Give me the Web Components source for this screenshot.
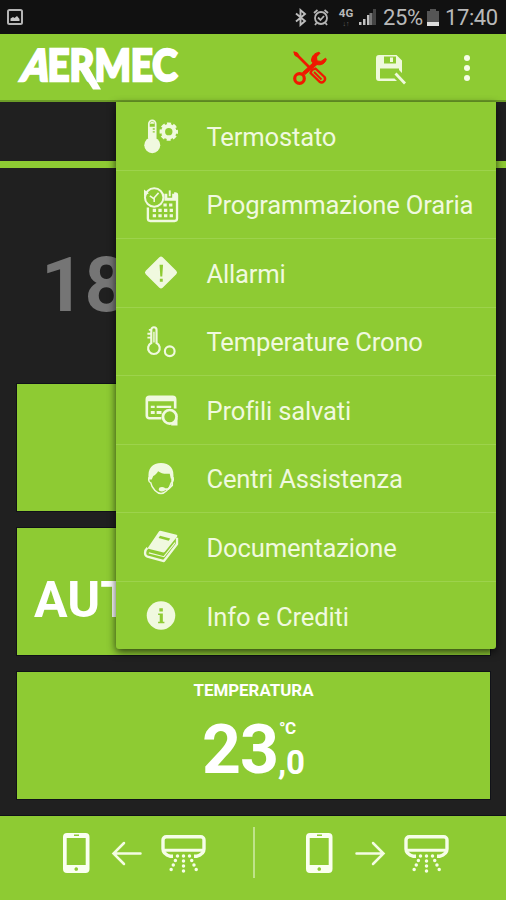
<!DOCTYPE html>
<html lang="it">
<head>
<meta charset="utf-8">
<title>Aermec</title>
<style>
  body {
    margin: 0;
    background: #202020;
    font-family: Roboto, "Liberation Sans", sans-serif;
  }
</style>
</head>
<body>
<aermec-app></aermec-app>

<script>
const ICONS = {
  picture: `<rect x="1" y="1" width="14" height="14" rx="1.5" fill="none" stroke="#b5b5b5" stroke-width="2"/><path fill="#c8c8c8" d="M3.5 12V9.5L6 8l1.5 1L10 7l2.5 3v2z"/>`,
  bluetooth: `<path fill="none" stroke="#bdbdbd" stroke-width="1.9" d="M1 4.500l9 7.500-4.500 4V1L10 5 1 12.500"/>`,
  alarm: `<g fill="none" stroke="#b5b5b5" stroke-width="1.800"><circle cx="8" cy="9" r="6"/><path d="M1 4l3.500-3M15 4l-3.500-3M5 8.500l2.500 2.500 3.500-4M3.500 14l-1.500 2M12.500 14l1.500 2"/></g>`,
  signal: `<path fill="#c0c0c0" d="M0 14h2.500v3H0zM4 11h2.500v6H4zM8 7h2.500v10H8z"/><path fill="#777" d="M10.500 5h3v12h-3z"/><path fill="#444" d="M14 1h3v16h-3z"/>`,
  battery: `<path fill="#555" d="M3 0h6v2h3v12H0V2h3z"/><path fill="#ddd" d="M0 13h12v4H0z"/>`,
  tools: `
    <g fill="none" stroke="#f01800" stroke-linejoin="round">
      <path stroke-width="2.600" d="M2 2l16 16"/>
      <path fill="#f01800" stroke-width="1" d="M.8.8l3.700 1.200 2 4.500-4.500-2z"/>
      <path stroke-width="2.400" d="M19 19l3.500-1.500 9 8.500c2 3-2 7-5 4.700L17.500 22z"/>
      <path stroke-width="1.800" d="M21 21l7.500 7.500"/>
      <path fill="#f01800" stroke-width="1" d="M9.500 21.500l10.500-9.500c-1-1-1.500-1.500-1.500-3C19 4.500 22 2 26 1.200l1 1-3.500 3.700.5 4 4 .5 4.500-3.200.8 1c-1 4-5 6.500-9.300 5.300L12 23.500z"/>
      <circle stroke-width="3.200" cx="6.500" cy="27.500" r="4.800"/>
    </g>`,
  save: `
    <path fill="#eff9dc" fill-rule="evenodd" d="M3 0h17.500L26 5.500V18l-3-3v-1.500H4v10h14.500L21 26H3a3 3 0 0 1-3-3V3a3 3 0 0 1 3-3zm5 1.500v7h12v-7z"/>
    <path fill="#eff9dc" d="M14 2.500h3v4.500h-3z"/>
    <path stroke="#eff9dc" stroke-width="2.800" d="M19.500 18.500l9.500 10"/>`,
  more: `<g fill="#f6fce9"><circle cx="3" cy="3" r="3"/><circle cx="3" cy="13" r="3"/><circle cx="3" cy="23" r="3"/></g>`,
  thermostat: `
    <path fill="none" stroke="currentColor" stroke-width="1.800" d="M5 20V5a3.500 3.500 0 0 1 7 0v15"/>
    <path fill="currentColor" d="M5 8h7v1.500H9V11h3v1.500H9V14h3v7H5zM6.200 5c0-3 4.600-3 4.600 0z"/>
    <circle fill="currentColor" cx="8.500" cy="27" r="8.200"/>
    <g fill="none" stroke="currentColor"><circle cx="25.500" cy="13" r="5.800" stroke-width="4"/>
    <circle cx="25.500" cy="13" r="8" stroke-width="3" stroke-dasharray="4 2.283" stroke-dashoffset="2"/></g>`,
  schedule: `
    <path fill="none" stroke="currentColor" stroke-width="2.400" d="M4 20v11.500a2.500 2.500 0 0 0 2.500 2.500h25a2.500 2.500 0 0 0 2.500-2.500V7.500a2 2 0 0 0-2-2h-1"/>
    <path fill="currentColor" d="M21 6h3v4h5V6h6v7H21z"/><path fill="currentColor" d="M25.500 2.500h2v6h-2z"/>
    <circle fill="none" stroke="currentColor" stroke-width="2.100" cx="10.500" cy="9.800" r="9.500"/>
    <path fill="currentColor" d="M0 1.500l5 4-5 3z"/><path fill="none" stroke="currentColor" stroke-width="1.600" d="M15 5l-4.500 5v4.500M6 8l4 3"/>
    <path stroke="currentColor" stroke-width="3.200" stroke-dasharray="3.400 2.400" d="M20 17.500h10M9 23h21M9 28.600h21"/>`,
  alert: `<path fill="currentColor" fill-rule="evenodd" d="M15.800 1.300q1.700-1.600 3.400 0l14 14q1.700 1.700 0 3.400l-14 14q-1.700 1.600-3.400 0l-14-14q-1.700-1.700 0-3.400zM16 9l.8 12h2l.8-12zM16.300 23.500v3h3v-3z"/>`,
  crono: `
    <g fill="none" stroke="currentColor" stroke-width="2.200"><path d="M7.500 18.500V5a2.700 2.700 0 0 1 5.400 0v13.500a6 6 0 1 1-5.400 0z"/><circle cx="26.500" cy="27" r="5"/></g>
    <path fill="currentColor" d="M5 4h3v2H5zM3.500 8h4v2h-4zM3.500 12h4v2h-4zM9.500 7h1.500v11H9.500z"/>`,
  profiles: `
    <path fill="none" stroke="currentColor" stroke-width="2.700" d="M18 26H5.500a2.600 2.600 0 0 1-2.600-2.600V6.500A2.600 2.600 0 0 1 5.500 4h24a2.600 2.600 0 0 1 2.600 2.600V16"/>
    <path fill="currentColor" d="M3 4h29v4.500H3zM7 13h4v2.500H7zM13 13h15v2.500H13zM7 18.500h4v3H7zM13 18.500h5v3h-5z"/>
    <circle fill="none" stroke="currentColor" stroke-width="2.800" cx="26.500" cy="24.500" r="7"/><path fill="currentColor" d="M28 32.500l6.500-7v8H28z"/>`,
  support: `
    <path fill="currentColor" d="M5 18C3 6 9 1 17.500 1S32 6 30 18l-2.500-1-1-5c-6 .5-9-.5-12-2.500-1 2-3 4-5 5L8 18z"/>
    <path fill="none" stroke="currentColor" stroke-width="1.500" d="M6 15c-2 1-1.500 6 1 6.500 1 6 7 11 10.500 11s9-5 10.500-11c2.500-.5 3-5.500 1-6.500"/>
    <path fill="none" stroke="currentColor" stroke-width="1.800" d="M29 17v7l-4 4h-6"/><ellipse cx="18.500" cy="28" rx="3.200" ry="2.300" fill="currentColor"/>`,
  book: `
    <path fill="currentColor" fill-rule="evenodd" d="M15 2Q16 .5 18 1l15.500 4q1.500.5.500 2L21.500 22.500q-1 1-2.500.5L3.500 19zM16.500 6l-1.500 2.300L25.500 11l1.500-2.300z"/>
    <path fill="none" stroke="currentColor" stroke-width="2.400" stroke-linejoin="round" d="M3.500 18.500c-3.500 3-3 8 0 9l17 4.500L34 14.500V8"/>
    <path fill="none" stroke="currentColor" stroke-width="1.200" d="M5 23.500l15.500 4L32 13"/>`,
  info: `<circle fill="currentColor" cx="17.500" cy="17" r="14.700"/><path fill="#8ecb33" d="M15.800 9.500h3.600v3.400h-3.600zM14.500 15h4.900v8.500H21V25h-6.500v-1.500h1.700v-7h-1.700z"/>`,
  phone: `<path fill="#fafff0" fill-rule="evenodd" d="M4 0h18.500a4 4 0 0 1 4 4v32a4 4 0 0 1-4 4H4a4 4 0 0 1-4-4V4a4 4 0 0 1 4-4zM3.700 5v27h19V5zM11 1.500v1.400h5V1.500zM13.200 34.200a1.800 1.800 0 1 0 .1 0z"/>`,
  left: `<path fill="none" stroke="#f4fce3" stroke-width="2.500" stroke-linecap="round" d="M12 2L1.500 12.500 12 23M1.500 12.500h27"/>`,
  right: `<path fill="none" stroke="#f4fce3" stroke-width="2.500" stroke-linecap="round" d="M18 2l10.500 10.500L18 23M28.500 12.500h-27"/>`,
  split: `
    <path fill="none" stroke="#f6fde8" stroke-width="3.400" stroke-linejoin="round" d="M12 21.300H9.500C5 20 2 17 2 14V5a3.300 3.300 0 0 1 3.300-3.300h34.400A3.300 3.300 0 0 1 43 5v9c0 3-3 6-7.500 7.300H33"/>
    <path stroke="#f6fde8" stroke-width="3" d="M2 15.300h41"/>
    <path fill="none" stroke="#f6fde8" stroke-width="3.500" stroke-linecap="round" stroke-dasharray="0 5" d="M16.500 21L9.500 36M22.500 21v16M28.500 21l7.500 15"/>`
};

class AppIcon extends HTMLElement {
  constructor() {
    super();
    this.attachShadow({ mode: 'open' });
  }

  connectedCallback() {
    const [w, h] = this.getAttribute('size').split(' ');
    const box = this.getAttribute('box') || `${w} ${h}`;
    this.shadowRoot.innerHTML = `
      <style>
        :host { display: block; flex: none; }
        svg { display: block; overflow: visible; }
      </style>
      <svg width="${w}" height="${h}" viewBox="0 0 ${box}">${ICONS[this.getAttribute('name')]}</svg>
    `;
  }
}

class StatusBar extends HTMLElement {
  constructor() {
    super();
    this.attachShadow({ mode: 'open' }).innerHTML = `
      <style>
        :host {
          display: flex;
          align-items: center;
          height: 34px;
          padding: 0 7px;
          box-sizing: border-box;
          background: #111;
          color: #b9b9b9;
          font-size: 22px;
          white-space: nowrap;
        }
        .space { flex: 1; }
        .net {
          display: flex;
          flex-direction: column;
          align-items: center;
          width: 16px;
          margin: 0 5px 0 9px;
          font-size: 11.500px;
          font-weight: 700;
          line-height: 13px;
        }
        .net small { font-size: 7px; line-height: 8px; color: #666; }
        .level { width: 39px; margin: 0 5px 0 7px; letter-spacing: -.4px; }
        .clock { width: 53px; margin: 0 1px 0 6px; letter-spacing: -.4px; }
      </style>
      <app-icon name="picture" size="16 16"></app-icon>
      <span class="space"></span>
      <app-icon name="bluetooth" size="11 17" style="margin-right:7px"></app-icon>
      <app-icon name="alarm" size="16 17"></app-icon>
      <span class="net">4G<small>↓↑</small></span>
      <app-icon name="signal" size="17 18"></app-icon>
      <span class="level">25%</span>
      <app-icon name="battery" size="12 17"></app-icon>
      <span class="clock">17:40</span>
    `;
  }
}

class AermecLogo extends HTMLElement {
  constructor() {
    super();
    this.attachShadow({ mode: 'open' }).innerHTML = `
      <style>
        :host { display: block; }
        svg { display: block; overflow: visible; }
        text { font: 900 44px Lato, sans-serif; fill: #fff; stroke: #fff; stroke-width: 2.400; }
      </style>
      <svg width="160" height="42" viewBox="0 0 160 42">
        <text transform="translate(1.500 32.700) skewX(-14)" textLength="27" lengthAdjust="spacingAndGlyphs">A</text>
        <text transform="translate(29.500 32.700)" textLength="130" lengthAdjust="spacingAndGlyphs">ERMEC</text>
        <path fill="#fff" d="M61 20h10l12 21.500h-8z"/>
      </svg>
    `;
  }
}

class AppToolbar extends HTMLElement {
  constructor() {
    super();
    this.attachShadow({ mode: 'open' }).innerHTML = `
      <style>
        :host {
          display: flex;
          align-items: flex-start;
          height: 68px;
          padding: 14px 36px 0 18px;
          box-sizing: border-box;
          background: #8ecb33;
          border-bottom: 2px solid #6c9d27;
        }
        ::slotted(.gap) { flex: 1; }
      </style>
      <aermec-logo></aermec-logo>
      <slot></slot>
    `;
  }
}

class ValueCard extends HTMLElement {
  constructor() {
    super();
    this.attachShadow({ mode: 'open' }).innerHTML = `
      <style>
        :host {
          display: block;
          height: 127px;
          background: #8ecb33;
          box-shadow: 0 0 0 1px #101218;
          color: #fff;
          font-weight: 700;
          overflow: hidden;
        }
      </style>
      <slot></slot>
    `;
  }
}

class TemperatureReading extends HTMLElement {
  constructor() {
    super();
    this.attachShadow({ mode: 'open' }).innerHTML = `
      <style>
        :host { display: block; }
        .title {
          padding-top: 8px;
          text-align: center;
          font-size: 16.900px;
          line-height: 20px;
        }
        .value {
          display: flex;
          justify-content: center;
          margin-top: 13px;
        }
        .whole { font-size: 68px; line-height: 74px; letter-spacing: -1px; }
        .side { display: flex; flex-direction: column; }
        .unit { padding: 5px 0 0 1px; font-size: 17px; line-height: 20px; letter-spacing: -.5px; }
        .decimal { padding-top: 8px; font-size: 33px; line-height: 34px; }
      </style>
      <div class="title"><slot></slot></div>
      <div class="value">
        <span class="whole"><slot name="whole"></slot></span>
        <span class="side">
          <span class="unit"><slot name="unit"></slot></span>
          <span class="decimal"><slot name="decimal"></slot></span>
        </span>
      </div>
    `;
  }
}

class MenuItem extends HTMLElement {
  constructor() {
    super();
    this.attachShadow({ mode: 'open' });
  }

  connectedCallback() {
    this.shadowRoot.innerHTML = `
      <style>
        :host {
          display: flex;
          align-items: center;
          gap: 28.500px;
          height: 68.500px;
          padding: 1px 0 0 28px;
          box-sizing: border-box;
          border-bottom: 1px solid #9dd34c;
          color: #f0f9df;
          font-size: 25.600px;
          letter-spacing: -.18px;
          white-space: nowrap;
        }
        :host(:last-child) { border-bottom: none; }
        span { padding-top: 1px; }
      </style>
      <app-icon name="${this.getAttribute('icon')}" size="34 34" box="35 35"></app-icon>
      <span><slot></slot></span>
    `;
  }
}

class OverflowMenu extends HTMLElement {
  constructor() {
    super();
    this.attachShadow({ mode: 'open' }).innerHTML = `
      <style>
        :host {
          display: block;
          width: 380px;
          height: 547px;
          background: #8ecb33;
          border-radius: 0 0 3px 3px;
          box-shadow: 0 3px 8px rgba(0, 0, 0, .7);
        }
      </style>
      <slot></slot>
    `;
  }
}

class SyncBar extends HTMLElement {
  constructor() {
    super();
    this.attachShadow({ mode: 'open' }).innerHTML = `
      <style>
        :host {
          display: flex;
          height: 84px;
          background: #8ecb33;
          box-shadow: 0 -1px #101218;
        }
        .group { display: flex; width: 253px; padding: 17px 0 0 63px; box-sizing: border-box; }
        .group:last-child { width: 251px; padding-left: 51px; }
        .group app-icon:nth-child(2) { margin: 8px 19px 0 22px; }
        .group app-icon:nth-child(3) { margin-top: 2px; }
        .line { width: 2px; height: 51px; margin-top: 11px; background: #bfe389; }
      </style>
      <div class="group">
        <app-icon name="phone" size="27 40"></app-icon>
        <app-icon name="left" size="30 25"></app-icon>
        <app-icon name="split" size="45 39"></app-icon>
      </div>
      <div class="line"></div>
      <div class="group">
        <app-icon name="phone" size="27 40"></app-icon>
        <app-icon name="right" size="30 25"></app-icon>
        <app-icon name="split" size="45 39"></app-icon>
      </div>
    `;
  }
}

class AermecApp extends HTMLElement {
  constructor() {
    super();
    this.attachShadow({ mode: 'open' }).innerHTML = `
      <style>
        :host {
          position: relative;
          display: flex;
          flex-direction: column;
          height: 900px;
          overflow: hidden;
        }
        .tabs { height: 59px; background: #202020; border-bottom: 7px solid #8ecb33; }
        .external {
          height: 216px;
          padding: 78px 0 0 41px;
          box-sizing: border-box;
          color: #757575;
          font-size: 76px;
          font-weight: 700;
          line-height: 78px;
        }
        .cards { flex: 1; display: grid; gap: 17px; align-content: start; padding: 0 16px 0 17px; }
        .mode { padding: 42px 0 0 17px; font-size: 50px; line-height: 60px; }
        overflow-menu { position: absolute; left: 116px; top: 102px; }
      </style>
      <status-bar></status-bar>
      <app-toolbar>
        <span class="gap"></span>
        <app-icon name="tools" size="34 35" style="margin:3px 49px 0 0"></app-icon>
        <app-icon name="save" size="29 29" style="margin:7px 59px 0 0"></app-icon>
        <app-icon name="more" size="6 26" style="margin-top:7px"></app-icon>
      </app-toolbar>
      <div class="tabs"></div>
      <div class="external">18</div>
      <div class="cards">
        <value-card></value-card>
        <value-card><div class="mode">AUT</div></value-card>
        <value-card>
          <temperature-reading>
            TEMPERATURA
            <span slot="whole">23</span>
            <span slot="unit">°C</span>
            <span slot="decimal">,0</span>
          </temperature-reading>
        </value-card>
      </div>
      <sync-bar></sync-bar>
      <overflow-menu>
        <menu-item icon="thermostat">Termostato</menu-item>
        <menu-item icon="schedule">Programmazione Oraria</menu-item>
        <menu-item icon="alert">Allarmi</menu-item>
        <menu-item icon="crono">Temperature Crono</menu-item>
        <menu-item icon="profiles">Profili salvati</menu-item>
        <menu-item icon="support">Centri Assistenza</menu-item>
        <menu-item icon="book">Documentazione</menu-item>
        <menu-item icon="info">Info e Crediti</menu-item>
      </overflow-menu>
    `;
  }
}

customElements.define('app-icon', AppIcon);
customElements.define('status-bar', StatusBar);
customElements.define('aermec-logo', AermecLogo);
customElements.define('app-toolbar', AppToolbar);
customElements.define('value-card', ValueCard);
customElements.define('temperature-reading', TemperatureReading);
customElements.define('menu-item', MenuItem);
customElements.define('overflow-menu', OverflowMenu);
customElements.define('sync-bar', SyncBar);
customElements.define('aermec-app', AermecApp);
</script>
</body>
</html>
